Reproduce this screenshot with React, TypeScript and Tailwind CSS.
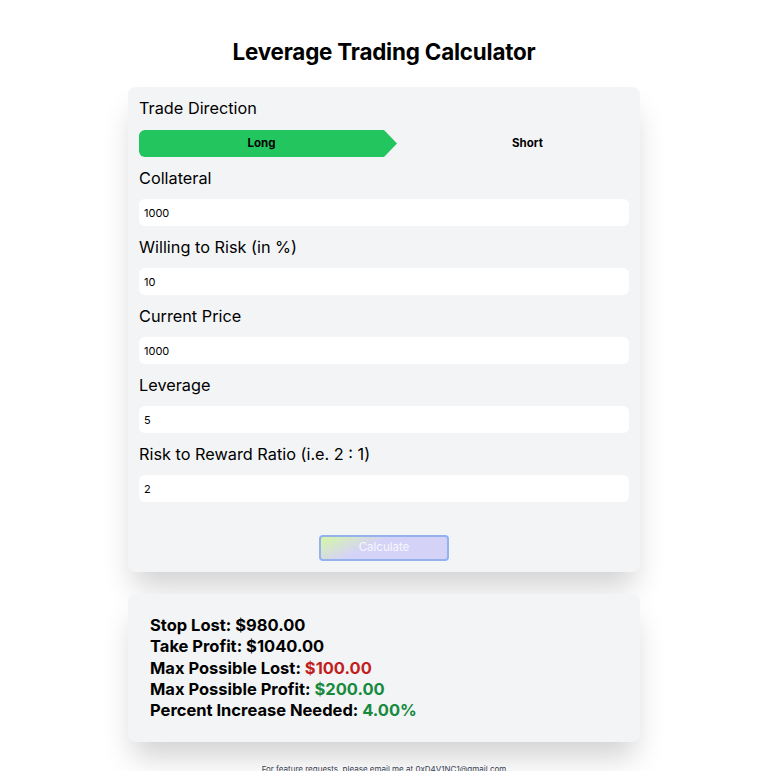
import React from "react";

const fields = [
  { label: "Collateral", value: "1000" },
  { label: "Willing to Risk (in %)", value: "10" },
  { label: "Current Price", value: "1000" },
  { label: "Leverage", value: "5" },
  { label: "Risk to Reward Ratio (i.e. 2 : 1)", value: "2" },
];

export default function App() {
  return (
    <div className="min-h-screen bg-white text-black font-['Inter','Noto_Sans',sans-serif]">
      <div className="flex flex-col items-center pl-[8px] pt-[36px]">
        <h1 className="text-[22.4px] leading-[32px] font-bold tracking-[-0.2px]">Leverage Trading Calculator</h1>
        <div className="mt-[19px] w-[512px] rounded-lg bg-gray-100 px-[11px] pt-[7px] pb-[11px] shadow-[0_20px_30px_-5px_rgba(0,0,0,0.18)]">
          <div className="text-[16.3px] leading-[28px]">Trade Direction</div>
          <div className="relative mt-[8px] grid h-[27px] grid-cols-2">
            <div className="absolute left-0 top-0 h-full w-[calc(50%+13px)] rounded-l-md bg-[#22c55e] [clip-path:polygon(0_0,calc(100%-13px)_0,100%_50%,calc(100%-13px)_100%,0_100%)]" />
            <button className="relative text-[11.5px] font-bold">Long</button>
            <button className="relative pl-[42px] text-[11.5px] font-bold">Short</button>
          </div>
          {fields.map((f) => (
            <div key={f.label}>
              <div className="mt-[7px] text-[16.3px] leading-[28px]">{f.label}</div>
              <input
                readOnly
                value={f.value}
                className="mt-[7px] block h-[27px] w-full rounded-md bg-white px-[5px] text-[11px] outline-none"
              />
            </div>
          ))}
          <div className="mt-[33px] flex justify-center">
            <button className="h-[26px] w-[130px] rounded border-2 border-[#93b2ee] bg-[linear-gradient(155deg,#d5f7a6_0%,#d5d2f8_40%,#d5d2f8_100%)] text-[11.5px] text-white/80">
              Calculate
            </button>
          </div>
        </div>
        <div className="mt-[22px] w-[512px] rounded-lg bg-gray-100 px-[22px] py-[21px] text-[16.5px] leading-[21.3px] font-bold shadow-[0_20px_30px_-5px_rgba(0,0,0,0.18)]">
          <div>Stop Lost: $980.00</div>
          <div>Take Profit: $1040.00</div>
          <div>
            Max Possible Lost: <span className="text-[#c21f1f]">$100.00</span>
          </div>
          <div>
            Max Possible Profit: <span className="text-[#178a3e]">$200.00</span>
          </div>
          <div>
            Percent Increase Needed: <span className="text-[#178a3e]">4.00%</span>
          </div>
        </div>
        <div className="mt-[21px] text-[8px] leading-[12px] text-gray-700">
          For feature requests, please email me at 0xD4V1NC1@gmail.com
        </div>
      </div>
    </div>
  );
}
